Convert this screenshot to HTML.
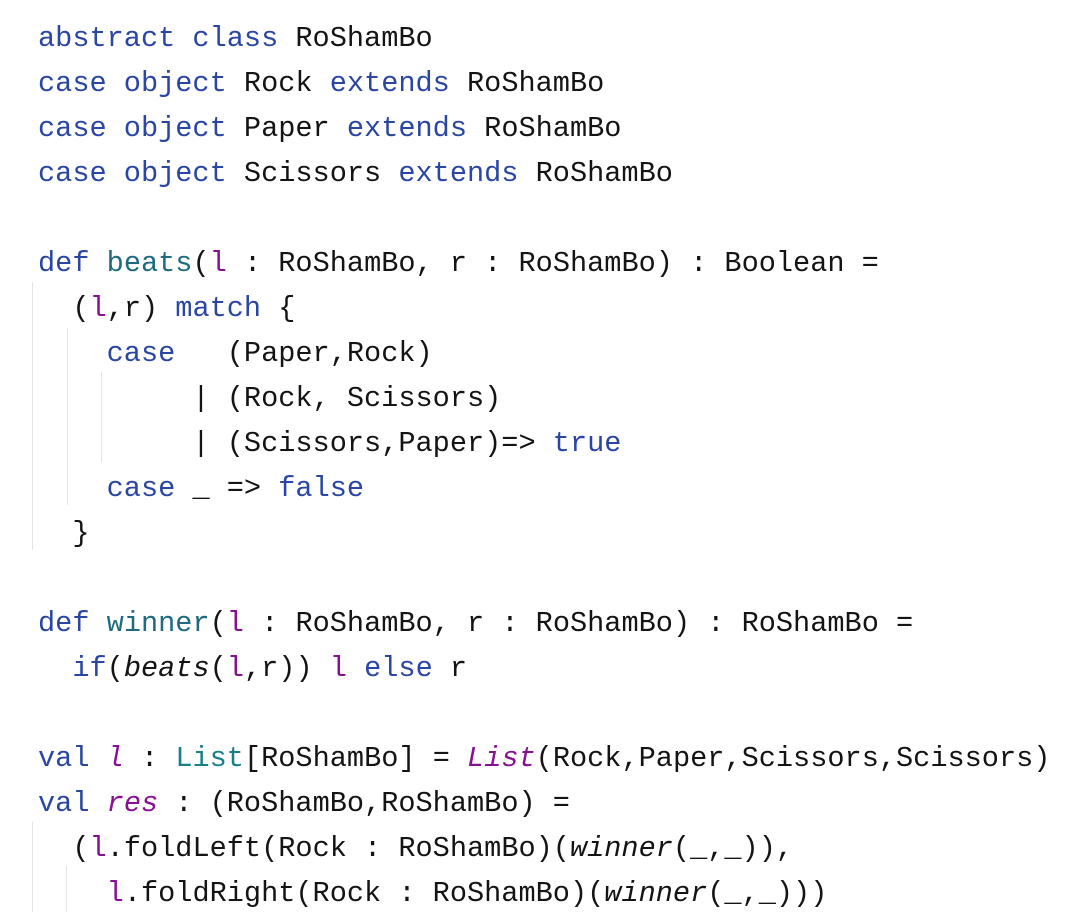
<!DOCTYPE html>
<html><head><meta charset="utf-8"><style>
html,body{margin:0;padding:0;background:#fff;width:1072px;height:924px;overflow:hidden}
.code{position:absolute;left:38px;top:16px;font-family:"Liberation Mono",monospace;font-size:28.6px;line-height:45px;color:#141414;white-space:pre}
.k{color:#2a46a3}.f{color:#1f6a80}.t{color:#1a8088}.v{color:#871094}.i{font-style:italic}
.g{position:absolute;width:1px;background:#e4e4e4}
</style></head><body>
<div class="g" style="left:32px;top:282px;height:268px"></div>
<div class="g" style="left:67px;top:328px;height:177px"></div>
<div class="g" style="left:101px;top:372px;height:90px"></div>
<div class="g" style="left:32px;top:822px;height:90px"></div>
<div class="g" style="left:66px;top:866px;height:46px"></div>
<div class="code"><span class="k">abstract class</span> RoShamBo
<span class="k">case object</span> Rock <span class="k">extends</span> RoShamBo
<span class="k">case object</span> Paper <span class="k">extends</span> RoShamBo
<span class="k">case object</span> Scissors <span class="k">extends</span> RoShamBo

<span class="k">def</span> <span class="f">beats</span>(<span class="v">l</span> : RoShamBo, r : RoShamBo) : Boolean =
  (<span class="v">l</span>,r) <span class="k">match</span> {
    <span class="k">case</span>   (Paper,Rock)
         | (Rock, Scissors)
         | (Scissors,Paper)=&gt; <span class="k">true</span>
    <span class="k">case</span> _ =&gt; <span class="k">false</span>
  }

<span class="k">def</span> <span class="f">winner</span>(<span class="v">l</span> : RoShamBo, r : RoShamBo) : RoShamBo =
  <span class="k">if</span>(<span class="i">beats</span>(<span class="v">l</span>,r)) <span class="v">l</span> <span class="k">else</span> r

<span class="k">val</span> <span class="v i">l</span> : <span class="t">List</span>[RoShamBo] = <span class="v i">List</span>(Rock,Paper,Scissors,Scissors)
<span class="k">val</span> <span class="v i">res</span> : (RoShamBo,RoShamBo) =
  (<span class="v">l</span>.foldLeft(Rock : RoShamBo)(<span class="i">winner</span>(_,_)),
    <span class="v">l</span>.foldRight(Rock : RoShamBo)(<span class="i">winner</span>(_,_)))</div>
</body></html>
